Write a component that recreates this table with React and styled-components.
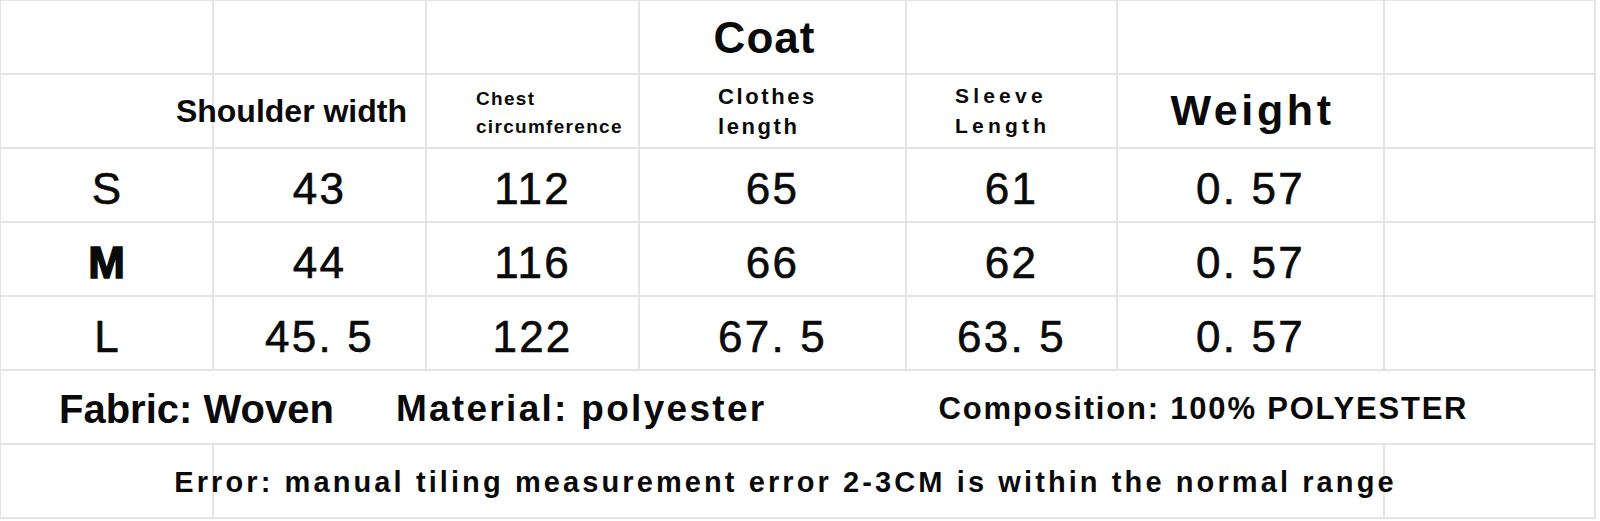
import React from 'react';
import styled, { createGlobalStyle } from 'styled-components';

const GlobalStyle = createGlobalStyle`
  html, body {
    margin: 0;
    padding: 0;
    background: #ffffff;
  }
  body {
    font-family: 'Liberation Sans', Arial, sans-serif;
    color: #0a0a0a;
  }
`;

// Grid of cells; the 2px gaps show the sheet colour as the table lines
const Sheet = styled.div`
  display: grid;
  grid-template-columns: 211px 211px 211px 265px 209px 265px 209px;
  grid-auto-rows: 72px;
  gap: 2px;
  padding: 1px 2px 2px 1px;
  width: 1593px;
  background: #e4e4e4;
`;

const Cell = styled.div`
  grid-column: span ${(p) => p.$span || 1};
  background: #ffffff;
  display: flex;
  align-items: center;
  justify-content: ${(p) => p.$justify || 'center'};
  padding: ${(p) => p.$pad || '0'};
  white-space: nowrap;
  overflow: visible;
  min-width: 0;
  position: ${(p) => (p.$front ? 'relative' : 'static')};
  z-index: ${(p) => (p.$front ? 1 : 'auto')};
`;

const Title = styled.div`
  font-size: 44px;
  font-weight: 700;
  letter-spacing: 1px;
  margin-top: 2px;
`;

// Column headings, each with its own size and tracking
const Heading = styled.div`
  font-weight: 700;
  font-size: ${(p) => p.$size}px;
  letter-spacing: ${(p) => p.$track || 0}px;
  line-height: ${(p) => p.$lh || 1.2};
`;

const SizeLabel = styled.div`
  font-size: 44px;
  font-weight: ${(p) => (p.$heavy ? 700 : 400)};
  -webkit-text-stroke: ${(p) => (p.$heavy ? '1.5px' : '0.6px')};
  margin-top: 8px;
`;

const Value = styled.div`
  font-size: 44px;
  letter-spacing: 2.2px;
  -webkit-text-stroke: 0.6px;
  margin-top: 8px;
`;

const InfoLine = styled.div`
  display: flex;
  align-items: center;
  width: 100%;
`;

const InfoText = styled.span`
  font-weight: 700;
  font-size: ${(p) => p.$size}px;
  letter-spacing: ${(p) => p.$track}px;
  margin-left: ${(p) => p.$left}px;
  margin-top: 4px;
`;

const Note = styled.div`
  font-weight: 700;
  font-size: 29px;
  letter-spacing: 3.1px;
  margin-right: 26px;
  margin-top: 2px;
`;

const sizes = [
  { label: 'S', values: ['43', '112', '65', '61', '0. 57'] },
  { label: 'M', heavy: true, values: ['44', '116', '66', '62', '0. 57'] },
  { label: 'L', values: ['45. 5', '122', '67. 5', '63. 5', '0. 57'] },
];

const App = () => {
  return (
    <>
      <GlobalStyle />
      <Sheet>
        <Cell />
        <Cell />
        <Cell />
        <Cell $pad="0 16px 0 0">
          <Title>Coat</Title>
        </Cell>
        <Cell />
        <Cell />
        <Cell />

        <Cell />
        <Cell $justify="flex-end" $pad="0 18px 0 0">
          <Heading $size={32}>Shoulder width</Heading>
        </Cell>
        <Cell $justify="flex-start" $pad="4px 0 0 49px">
          <Heading $size={19} $track={1.3} $lh={1.45}>
            Chest
            <br />
            circumference
          </Heading>
        </Cell>
        <Cell $justify="flex-start" $pad="2px 0 0 78px">
          <Heading $size={22} $track={2.6} $lh={1.35}>
            Clothes
            <br />
            length
          </Heading>
        </Cell>
        <Cell $justify="flex-start" $pad="0 0 0 48px">
          <Heading $size={21} $track={4.2} $lh={1.45}>
            Sleeve
            <br />
            Length
          </Heading>
        </Cell>
        <Cell $pad="0 0 0 4px">
          <Heading $size={43} $track={3.6}>Weight</Heading>
        </Cell>
        <Cell />

        {sizes.map((row) => (
          <React.Fragment key={row.label}>
            <Cell>
              <SizeLabel $heavy={row.heavy}>{row.label}</SizeLabel>
            </Cell>
            {row.values.map((v, i) => (
              <Cell key={i}>
                <Value>{v}</Value>
              </Cell>
            ))}
            <Cell />
          </React.Fragment>
        ))}

        <Cell $span={7}>
          <InfoLine>
            <InfoText $size={40} $track={0} $left={58}>Fabric: Woven</InfoText>
            <InfoText $size={37} $track={2.3} $left={62}>Material: polyester</InfoText>
            <InfoText $size={31} $track={1.8} $left={172}>Composition: 100% POLYESTER</InfoText>
          </InfoLine>
        </Cell>

        <Cell />
        <Cell $span={5} $front>
          <Note>Error: manual tiling measurement error 2-3CM is within the normal range</Note>
        </Cell>
        <Cell />
      </Sheet>
    </>
  );
};

export default App;
